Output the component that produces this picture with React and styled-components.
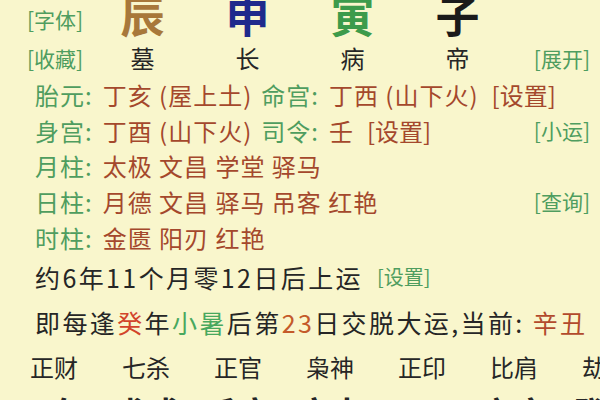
import React from "react";
import styled, { createGlobalStyle } from "styled-components";

const Global = createGlobalStyle`
  html, body { margin: 0; padding: 0; }
  body {
    background: #f9f6cc;
    font-family: "Noto Sans CJK SC", "Noto Sans", sans-serif;
    overflow: hidden;
  }
`;

const C = {
  green: "#4f9d5f",
  red: "#a4482c",
  black: "#262626",
};

const Page = styled.div`
  width: 600px;
  height: 400px;
  overflow: hidden;
  background: #f9f6cc;
  display: flex;
  flex-direction: column;
`;

const PillarRow = styled.div`
  display: grid;
  grid-template-columns: 90px repeat(4, 105px) 1fr;
  align-items: center;
  height: ${(p) => p.$h}px;
`;

const SideTag = styled.span`
  font-size: 21px;
  color: ${C.green};
  line-height: 1;
  justify-self: ${(p) => (p.$right ? "end" : "start")};
  padding-left: ${(p) => (p.$right ? 0 : 27)}px;
  padding-right: ${(p) => (p.$right ? 10 : 0)}px;
`;

const Stem = styled.span`
  justify-self: center;
  font-size: 44px;
  font-weight: 700;
  line-height: 28px;
  color: ${(p) => p.$c};
  align-self: start;
`;

const Phase = styled.span`
  justify-self: center;
  font-size: 24px;
  line-height: 1;
  color: ${C.black};
`;

const InfoRow = styled.div`
  display: flex;
  align-items: center;
  height: ${(p) => p.$h || 36}px;
  padding: 0 10px 0 35px;
  font-size: 24px;
  letter-spacing: 1px;
  white-space: nowrap;
`;

const Key = styled.span`
  color: ${C.green};
  margin-right: 10px;
`;

const Val = styled.span`
  color: ${C.red};
  margin-right: 9px;
`;

const Tag = styled.span`
  color: ${(p) => p.$c || C.red};
  font-size: ${(p) => p.$size || 24}px;
  letter-spacing: 0;
  margin-left: ${(p) => (p.$push ? "auto" : p.$gap ? `${p.$gap}px` : "4px")};
`;

const Sentence = styled.div`
  display: flex;
  align-items: center;
  height: ${(p) => p.$h}px;
  padding-left: 35px;
  font-size: 25px;
  letter-spacing: 2.4px;
  color: ${C.black};
  white-space: nowrap;
`;

const Tint = styled.span`
  color: ${(p) => p.$c};
`;

const GodRow = styled.div`
  display: grid;
  grid-template-columns: repeat(7, 92px);
  align-items: center;
  height: ${(p) => p.$h}px;
  padding-left: 8px;
  white-space: nowrap;
`;

const God = styled.span`
  justify-self: center;
  font-size: ${(p) => (p.$big ? 34 : 24)}px;
  font-weight: ${(p) => (p.$big ? 700 : 400)};
  line-height: 1;
  color: ${(p) => p.$c || C.black};
  ${(p) => (p.$big ? "align-self: end; margin-bottom: -30px;" : "")}
`;

const stems = [
  { t: "辰", c: "#a8783a" },
  { t: "申", c: "#1f2a8c" },
  { t: "寅", c: "#3d9b4b" },
  { t: "子", c: "#1a1a1a" },
];

const phases = ["墓", "长", "病", "帝"];

const gods = ["正财", "七杀", "正官", "枭神", "正印", "比肩", "劫财"];
const below = [
  { t: "丙午", c: C.black },
  { t: "戊戌", c: C.black },
  { t: "壬寅", c: C.black },
  { t: "庚申", c: C.black },
  { t: "丁巳", c: "#c8402a" },
  { t: "辛亥", c: C.black },
  { t: "癸酉", c: C.black },
];

export default function App() {
  return (
    <Page>
      <Global />
      <PillarRow $h={40}>
        <SideTag>[字体]</SideTag>
        {stems.map((s) => (
          <Stem key={s.t} $c={s.c}>
            {s.t}
          </Stem>
        ))}
        <span />
      </PillarRow>
      <PillarRow $h={37}>
        <SideTag>[收藏]</SideTag>
        {phases.map((p) => (
          <Phase key={p}>{p}</Phase>
        ))}
        <SideTag $right>[展开]</SideTag>
      </PillarRow>

      <InfoRow>
        <Key>胎元:</Key>
        <Val>丁亥 (屋上土)</Val>
        <Key>命宫:</Key>
        <Val>丁西 (山下火)</Val>
        <Tag>[设置]</Tag>
      </InfoRow>
      <InfoRow>
        <Key>身宫:</Key>
        <Val>丁酉 (山下火)</Val>
        <Key>司令:</Key>
        <Val>壬</Val>
        <Tag>[设置]</Tag>
        <Tag $push $c={C.green} $size={21}>
          [小运]
        </Tag>
      </InfoRow>
      <InfoRow>
        <Key>月柱:</Key>
        <Val>太极 文昌 学堂 驿马</Val>
      </InfoRow>
      <InfoRow>
        <Key>日柱:</Key>
        <Val>月德 文昌 驿马 吊客 红艳</Val>
        <Tag $push $c={C.green} $size={21}>
          [查询]
        </Tag>
      </InfoRow>
      <InfoRow>
        <Key>时柱:</Key>
        <Val>金匮 阳刃 红艳</Val>
      </InfoRow>

      <Sentence $h={44}>
        约6年11个月零12日后上运
        <Tag $c={C.green} $size={20} $gap={14}>
          [设置]
        </Tag>
      </Sentence>
      <Sentence $h={46}>
        即每逢<Tint $c="#d2442a">癸</Tint>年<Tint $c="#48a85e">小暑</Tint>后第
        <Tint $c="#c45a2a">23</Tint>日交脱大运,当前:&nbsp;
        <Tint $c="#b24a2c">辛丑</Tint>
      </Sentence>
      <GodRow $h={46}>
        {gods.map((g) => (
          <God key={g}>{g}</God>
        ))}
      </GodRow>
      <GodRow $h={10}>
        {below.map((b) => (
          <God key={b.t} $big $c={b.c}>
            {b.t}
          </God>
        ))}
      </GodRow>
    </Page>
  );
}
